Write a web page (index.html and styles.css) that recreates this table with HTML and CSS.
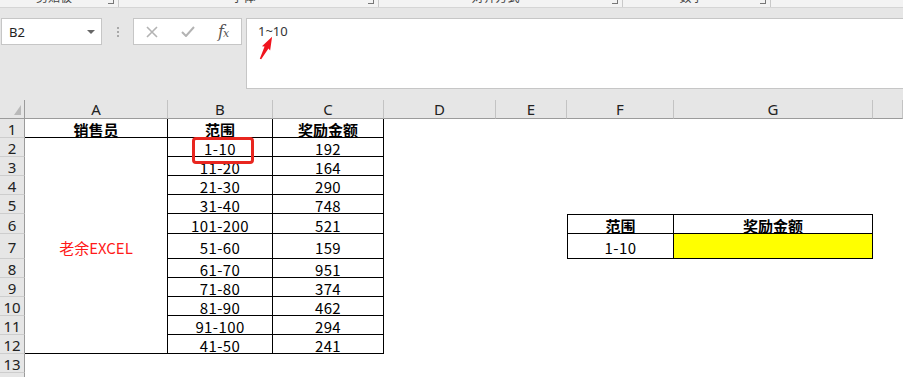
FILE: index.html
```html
<!DOCTYPE html>
<html lang="zh-CN">
<head>
  <meta charset="UTF-8" />
  <title>奖励金额</title>
  <link rel="stylesheet" href="styles.css">
</head>
<body>

  <!-- bottom edge of the ribbon, group captions mostly scrolled away -->
  <div class="ribbon-edge">
    <div class="group g1"><span class="label">剪贴板</span><i class="launcher"></i></div>
    <div class="group g2"><span class="label">字体</span><i class="launcher"></i></div>
    <div class="group g3"><span class="label">对齐方式</span><i class="launcher"></i></div>
    <div class="group g4"><span class="label">数字</span><i class="launcher"></i></div>
  </div>

  <div class="formula-row">
    <div class="name-box">B2 <i class="caret"></i></div>
    <div class="grip"><i></i><i></i><i></i></div>
    <div class="fx-box">
      <span class="btn">
        <svg width="12" height="12" viewBox="0 0 12 12"><path d="M1 1 L11 11 M11 1 L1 11" stroke="#b3b3b3" stroke-width="1.6" fill="none"/></svg>
      </span>
      <span class="btn">
        <svg width="14" height="11" viewBox="0 0 14 11"><path d="M1 6 L5 10 L13 1" stroke="#b3b3b3" stroke-width="2" fill="none"/></svg>
      </span>
      <span class="btn fx">f<small>x</small></span>
    </div>
    <div class="formula-bar">
      1~10
      <svg class="pointer" width="22" height="30" viewBox="0 0 22 30">
        <path transform="translate(3.5 26) rotate(27.6)" d="M-0.8 0 L-2.2 -13 L-4.6 -12 L0 -25 L4.6 -12 L2.2 -13 L0.8 0 Z" fill="#f0141e"/>
      </svg>
    </div>
  </div>

  <table class="sheet">
    <colgroup>
      <col class="w-rn"><col class="w-a"><col class="w-b"><col class="w-c"><col class="w-d">
      <col class="w-e"><col class="w-f"><col class="w-g"><col class="w-h">
    </colgroup>
    <tr class="col-heads">
      <th class="corner"><svg width="25" height="18" viewBox="0 0 25 18"><path d="M21 5 L21 15 L14 15 Z" fill="#b9b9b9"/></svg></th>
      <th>A</th><th>B</th><th>C</th><th>D</th><th>E</th><th>F</th><th>G</th><th></th>
    </tr>
    <tr>
      <th class="rn">1</th>
      <td class="bd hd">销售员</td><td class="bd hd">范围</td><td class="bd hd">奖励金额</td>
      <td></td><td></td><td></td><td></td><td></td>
    </tr>
    <tr>
      <th class="rn">2</th>
      <td class="bd merged" rowspan="11">老余EXCEL</td>
      <td class="bd sel">1-10</td><td class="bd">192</td>
      <td></td><td></td><td></td><td></td><td></td>
    </tr>
    <tr><th class="rn">3</th><td class="bd">11-20</td><td class="bd">164</td><td></td><td></td><td></td><td></td><td></td></tr>
    <tr><th class="rn">4</th><td class="bd">21-30</td><td class="bd">290</td><td></td><td></td><td></td><td></td><td></td></tr>
    <tr><th class="rn">5</th><td class="bd">31-40</td><td class="bd">748</td><td></td><td></td><td></td><td></td><td></td></tr>
    <tr>
      <th class="rn">6</th><td class="bd">101-200</td><td class="bd">521</td><td></td><td></td>
      <td class="bd hd top left">范围</td><td class="bd hd top">奖励金额</td><td></td>
    </tr>
    <tr class="tall">
      <th class="rn">7</th><td class="bd">51-60</td><td class="bd">159</td><td></td><td></td>
      <td class="bd left">1-10</td><td class="bd fill"></td><td></td>
    </tr>
    <tr><th class="rn">8</th><td class="bd">61-70</td><td class="bd">951</td><td></td><td></td><td></td><td></td><td></td></tr>
    <tr><th class="rn">9</th><td class="bd">71-80</td><td class="bd">374</td><td></td><td></td><td></td><td></td><td></td></tr>
    <tr><th class="rn">10</th><td class="bd">81-90</td><td class="bd">462</td><td></td><td></td><td></td><td></td><td></td></tr>
    <tr><th class="rn">11</th><td class="bd">91-100</td><td class="bd">294</td><td></td><td></td><td></td><td></td><td></td></tr>
    <tr><th class="rn">12</th><td class="bd">41-50</td><td class="bd">241</td><td></td><td></td><td></td><td></td><td></td></tr>
    <tr><th class="rn">13</th><td></td><td></td><td></td><td></td><td></td><td></td><td></td><td></td></tr>
    <tr><th class="rn">14</th><td></td><td></td><td></td><td></td><td></td><td></td><td></td><td></td></tr>
  </table>

</body>
</html>
```

FILE: styles.css
```css
body {
  margin: 0;
  width: 903px;
  height: 377px;
  overflow: hidden;
  background: #fff;
  font-family: "Noto Sans", "Noto Sans CJK SC", sans-serif;
}

/* ribbon edge */
.ribbon-edge {
  display: flex;
  height: 7px;
  background: #f3f3f3;
  border-bottom: 1px solid #d5d5d5;
  overflow: hidden;
}

.group {
  display: flex;
  align-items: flex-start;
  box-sizing: border-box;
  border-right: 1px solid #c9c9c9;
}

.g1 { width: 119px; }
.g2 { width: 260px; }
.g3 { width: 244px; }
.g4 { width: 148px; }

.label {
  flex: 1;
  margin-top: -9px;
  text-align: center;
  font: 12px/12px "Noto Sans CJK SC", sans-serif;
  color: #444;
}

.launcher {
  width: 5px;
  height: 4px;
  margin: -1px 4px 0 0;
  border-right: 1px solid #777;
  border-bottom: 1px solid #777;
}

/* name box + formula bar */
.formula-row {
  display: flex;
  align-items: flex-start;
  height: 92px;
  box-sizing: border-box;
  padding: 10px 0 0 1px;
  background: #e6e6e6;
}

.name-box {
  display: flex;
  align-items: center;
  justify-content: space-between;
  width: 101px;
  height: 27px;
  box-sizing: border-box;
  padding: 0 6px 0 7px;
  border: 1px solid #c6c6c6;
  background: #fff;
  font-size: 13px;
  color: #222;
}

.caret {
  border-left: 4px solid transparent;
  border-right: 4px solid transparent;
  border-top: 4px solid #666;
}

.grip {
  display: flex;
  flex-direction: column;
  gap: 2px;
  margin: 9px 14px 0 15px;
}

.grip i {
  width: 2px;
  height: 2px;
  background: #a8a8a8;
}

.fx-box {
  display: flex;
  align-items: center;
  width: 109px;
  height: 27px;
  box-sizing: border-box;
  border: 1px solid #c6c6c6;
  background: #fff;
}

.btn {
  display: flex;
  align-items: center;
  justify-content: center;
  width: 36px;
  height: 25px;
}

.fx {
  font: italic 16px "DejaVu Serif", serif;
  color: #555;
  letter-spacing: -1px;
}

.fx small {
  font-size: 11px;
  margin-top: 4px;
}

.formula-bar {
  position: relative;
  flex: 1;
  height: 71px;
  margin-left: 4px;
  box-sizing: border-box;
  padding: 4px 0 0 11px;
  border: 1px solid #c6c6c6;
  border-right: 0;
  background: #fff;
  font-size: 13px;
  line-height: 16px;
  color: #333;
}

.pointer {
  position: absolute;
  left: 10px;
  top: 14px;
}

/* worksheet */
.sheet {
  width: 903px;
  table-layout: fixed;
  border-collapse: separate;
  border-spacing: 0;
}

.w-rn { width: 25px; }
.w-a { width: 143px; }
.w-b { width: 105px; }
.w-c { width: 111px; }
.w-d { width: 112px; }
.w-e { width: 71px; }
.w-f { width: 107px; }
.w-g { width: 199px; }
.w-h { width: 30px; }

.sheet tr { height: 19px; }
.sheet tr.tall { height: 25px; }
.sheet tr.col-heads { height: 18px; }

.col-heads th {
  padding: 0;
  box-sizing: border-box;
  background: #e6e6e6;
  border-right: 1px solid #c3c3c3;
  border-bottom: 1px solid #9b9b9b;
  font: 400 15px/17px "Noto Sans", sans-serif;
  color: #222;
}

.col-heads th.corner {
  border-right-color: #9b9b9b;
  line-height: 0;
}

.rn {
  padding: 3px 0 0;
  box-sizing: border-box;
  background: #e6e6e6;
  border-right: 1px solid #9b9b9b;
  border-bottom: 1px solid #cdcdcd;
  font: 400 15px/15px "Noto Sans", sans-serif;
  color: #222;
}

.sheet td {
  padding: 3px 0 0;
  box-sizing: border-box;
  font: 15px/15px "Noto Sans CJK SC", sans-serif;
  color: #000;
  text-align: center;
  vertical-align: middle;
  white-space: nowrap;
  letter-spacing: 0.4px;
}

.sheet td.bd {
  border-right: 1px solid #000;
  border-bottom: 1px solid #000;
}

.sheet td.top { border-top: 1px solid #000; }
.sheet td.left { border-left: 1px solid #000; }
.sheet td.hd { font-weight: 700; letter-spacing: 0; }
.sheet td.merged { color: #ff1a1a; letter-spacing: 0; }
.sheet td.fill { background: #ffff00; }

/* hand-drawn marker round the selected cell */
.sheet td.sel { position: relative; }

.sheet td.sel::after {
  content: "";
  position: absolute;
  left: 24px;
  top: -1px;
  width: 62px;
  height: 27px;
  box-sizing: border-box;
  border: 3px solid #e8261f;
  border-radius: 4px;
}
```
